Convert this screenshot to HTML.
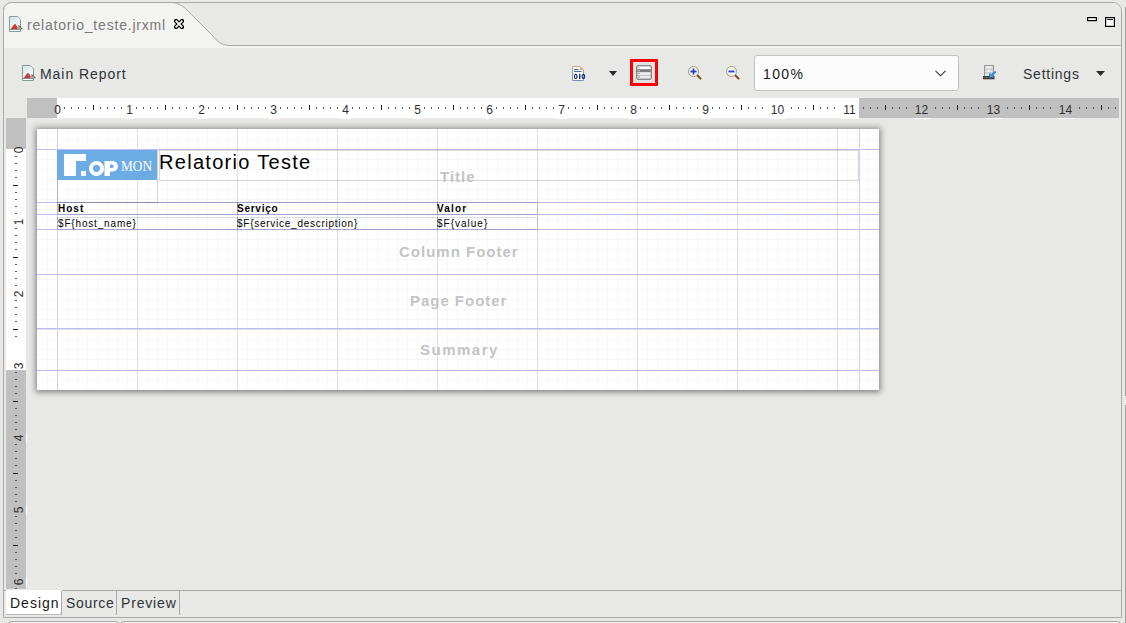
<!DOCTYPE html><html><head><meta charset="utf-8"><style>
*{margin:0;padding:0;box-sizing:border-box}
html,body{width:1126px;height:623px;overflow:hidden;background:#e8e8e7;font-family:"Liberation Sans", sans-serif;position:relative}
.abs{position:absolute}
.t{position:absolute;white-space:nowrap;line-height:1}
</style></head><body>
<div class="abs" style="left:1125px;top:7px;width:1px;height:389px;background:#a0a0a0"></div>
<div class="abs" style="left:1125px;top:405px;width:1px;height:218px;background:#a0a0a0"></div>
<div class="abs" style="left:1119px;top:48px;width:2px;height:570px;background:#f0f0ef"></div>
<div class="abs" style="left:3px;top:2px;width:1119px;height:616px;border:1px solid #a9a9a9;border-radius:9px 9px 0 0;background:#e8e8e7"></div>
<div class="abs" style="left:4px;top:3px;width:1117px;height:42px;background:#e8e8e7;border-radius:8px 8px 0 0"></div>
<div class="abs" style="left:4px;top:46px;width:1117px;height:2px;background:#f3f3f2"></div>
<svg class="abs" style="left:0;top:0" width="1126" height="50"><path d="M3.5,48 L3.5,10.5 A8,8 0 0 1 11.5,2.5 L171,2.5 C176,2.5 180,4.2 184.5,7.7 L211.5,34.5 C216,40 221,45.5 229,45.5 L1121,45.5 L1121,48 Z" fill="#f3f3f2"/><path d="M3.5,48 L3.5,10.5 A8,8 0 0 1 11.5,2.5 L171,2.5 C176,2.5 180,4.2 184.5,7.7 L211.5,34.5 C216,40 221,45.5 229,45.5 L1121,45.5" fill="none" stroke="#a9a9a9" stroke-width="1"/></svg>
<svg class="abs" style="left:9px;top:16px" width="14" height="16" viewBox="0 0 14 16" ><defs><linearGradient id="g1" x1="0" y1="0" x2="0.5" y2="1"><stop offset="0" stop-color="#cfe5e7"/><stop offset="1" stop-color="#fbfdfd"/></linearGradient></defs><path d="M0.5,0.5 H8.3 L11.5,3.7 V15.5 H0.5 Z" fill="url(#g1)" stroke="#869a9a" stroke-width="1"/><rect x="8.8" y="1.8" width="1.3" height="1.3" fill="#ffffff"/><path d="M1.6,13.2 L5.2,8.2 L6.7,8.2 L9,12 L8,13.2 Z" fill="#d0363a"/><path d="M7.6,13.2 L9.6,9.2 L13.6,13.2 Z" fill="#a9a9a9"/><path d="M9.8,9.4 L13.4,13.1" stroke="#3a3a3a" stroke-width="0.9" fill="none"/><rect x="1" y="13.7" width="10" height="1.3" fill="#ffffff"/><rect x="1" y="12.9" width="10.5" height="0.8" fill="#5f6e6e"/></svg>
<div class="t" style="left:27px;top:18px;font-size:14px;color:#7a7a7a;letter-spacing:0.8px">relatorio_teste.jrxml</div>
<svg class="abs" style="left:174px;top:19px" width="10" height="10" viewBox="0 0 10 10" ><path d="M2,2 L8,8 M8,2 L2,8" stroke="#000" stroke-width="4.2" stroke-linecap="square" fill="none"/><path d="M2.2,2.2 L7.8,7.8 M7.8,2.2 L2.2,7.8" stroke="#fff" stroke-width="1.7" stroke-linecap="square" fill="none"/></svg>
<svg class="abs" style="left:1087px;top:17px" width="10" height="5" viewBox="0 0 10 5" ><rect x="0.6" y="0.6" width="8.8" height="3" fill="#fff" stroke="#000" stroke-width="1.2"/></svg>
<svg class="abs" style="left:1105px;top:17px" width="10" height="10" viewBox="0 0 10 10" ><rect x="0.6" y="0.6" width="8.8" height="8.8" fill="#fff" stroke="#000" stroke-width="1.2"/><rect x="2" y="2" width="6" height="0.9" fill="#000"/></svg>
<svg class="abs" style="left:22px;top:65px" width="14" height="16" viewBox="0 0 14 16" ><defs><linearGradient id="g2" x1="0" y1="0" x2="0.5" y2="1"><stop offset="0" stop-color="#cfe5e7"/><stop offset="1" stop-color="#fbfdfd"/></linearGradient></defs><path d="M0.5,0.5 H8.3 L11.5,3.7 V15.5 H0.5 Z" fill="url(#g2)" stroke="#869a9a" stroke-width="1"/><rect x="8.8" y="1.8" width="1.3" height="1.3" fill="#ffffff"/><path d="M1.6,13.2 L5.2,8.2 L6.7,8.2 L9,12 L8,13.2 Z" fill="#d0363a"/><path d="M7.6,13.2 L9.6,9.2 L13.6,13.2 Z" fill="#a9a9a9"/><path d="M9.8,9.4 L13.4,13.1" stroke="#3a3a3a" stroke-width="0.9" fill="none"/><rect x="1" y="13.7" width="10" height="1.3" fill="#ffffff"/><rect x="1" y="12.9" width="10.5" height="0.8" fill="#5f6e6e"/></svg>
<div class="t" style="left:40px;top:67px;font-size:14px;color:#2e3436;letter-spacing:0.95px">Main Report</div>
<svg class="abs" style="left:572px;top:66px" width="14" height="15" viewBox="0 0 14 15" ><defs><linearGradient id="bg1" x1="0" y1="0" x2="0" y2="1"><stop offset="0" stop-color="#c8b070"/><stop offset="1" stop-color="#8090b8"/></linearGradient></defs><path d="M0.5,0.5 H8 L11.5,4 V14.5 H0.5 Z" fill="#f4f6fb" stroke="url(#bg1)" stroke-width="1"/><path d="M8,0.5 V4 H11.5 Z" fill="#e8b850"/><rect x="2" y="3" width="4.5" height="1" fill="#4a6aa8"/><rect x="2" y="5" width="7.5" height="1" fill="#4a6aa8"/><ellipse cx="3.7" cy="10.4" rx="1.3" ry="2.05" fill="none" stroke="#0d2a6a" stroke-width="1.15"/><rect x="7.1" y="7.8" width="1.3" height="5.2" fill="#0d2a6a"/><ellipse cx="11.4" cy="10.4" rx="1.3" ry="2.05" fill="none" stroke="#0d2a6a" stroke-width="1.15"/></svg>
<svg class="abs" style="left:609px;top:71px" width="8" height="5" viewBox="0 0 8 5" ><path d="M0,0 H8 L4.0,5 Z" fill="#2a2a2a"/></svg>
<div class="abs" style="left:630px;top:59px;width:28px;height:27px;border:3px solid #ff0000;border-radius:1px;background:#e2e2e2"></div>
<svg class="abs" style="left:636px;top:65px" width="16" height="15" viewBox="0 0 16 15" ><rect x="0.5" y="0.5" width="15" height="14" rx="1.5" fill="#9a9a9a" stroke="#8a8a8a"/><rect x="1.5" y="1.5" width="13" height="2.6" fill="#ffffff"/><rect x="1.5" y="4.5" width="13" height="2.4" fill="#7a7a7a"/><rect x="1.5" y="7.3" width="13" height="2.6" fill="#f2f2f2"/><rect x="1.5" y="10.5" width="13" height="3" fill="#ececec"/><circle cx="3" cy="2.8" r="0.6" fill="#777"/><circle cx="3" cy="5.7" r="0.6" fill="#fff"/><circle cx="3" cy="8.6" r="0.6" fill="#555"/><circle cx="3" cy="12" r="0.6" fill="#444"/></svg>
<svg class="abs" style="left:688px;top:66px" width="14" height="14" viewBox="0 0 14 14" ><line x1="9" y1="9" x2="12.5" y2="12.5" stroke="#7a4a2a" stroke-width="2" stroke-linecap="round"/><circle cx="5.5" cy="5.5" r="5" fill="#f0f4f8" stroke="#a89a6a" stroke-width="1"/><rect x="2.5" y="4.6" width="6" height="1.8" fill="#2a3ad0"/><rect x="4.6" y="2.5" width="1.8" height="6" fill="#2a3ad0"/></svg>
<svg class="abs" style="left:726px;top:66px" width="14" height="14" viewBox="0 0 14 14" ><line x1="9" y1="9" x2="12.5" y2="12.5" stroke="#7a4a2a" stroke-width="2" stroke-linecap="round"/><circle cx="5.5" cy="5.5" r="5" fill="#f0f4f8" stroke="#a89a6a" stroke-width="1"/><rect x="2.5" y="4.6" width="6" height="1.8" fill="#2a3ad0"/></svg>
<div class="abs" style="left:754px;top:55px;width:205px;height:36px;background:#fcfcfc;border:1px solid #c2c2c2;border-radius:3px"></div>
<div class="t" style="left:763px;top:67px;font-size:14px;color:#1a1a1a;letter-spacing:1.4px">100%</div>
<svg class="abs" style="left:935px;top:70px" width="11" height="7" viewBox="0 0 11 7" ><path d="M0.5,0.8 L5.5,5.8 L10.5,0.8" fill="none" stroke="#333" stroke-width="1.1"/></svg>
<svg class="abs" style="left:982px;top:65px" width="15" height="15" viewBox="0 0 15 15" ><defs><linearGradient id="sg" x1="0" y1="0" x2="1" y2="0"><stop offset="0" stop-color="#d8d8d8"/><stop offset="0.5" stop-color="#f4f4f4"/><stop offset="1" stop-color="#d0d0d0"/></linearGradient></defs><rect x="2.5" y="0.5" width="9" height="11" fill="url(#sg)" stroke="#9a9a9a"/><rect x="3" y="3.8" width="8" height="0.9" fill="#c0c0c0"/><rect x="3" y="7.3" width="8" height="0.9" fill="#c0c0c0"/><rect x="1" y="11" width="11.5" height="3.3" fill="#3c3c3c"/><rect x="1" y="12.3" width="11.5" height="0.8" fill="#707070"/><path d="M13.2,6.4 L14,7.2 L10.4,10.8 L11.8,12.2 L7.4,12.6 L7.8,8.2 L9.2,9.6 Z" fill="#3aa0f0" stroke="#1b62b8" stroke-width="0.7" stroke-linejoin="round"/></svg>
<div class="t" style="left:1023px;top:67px;font-size:14px;color:#2e3436;letter-spacing:0.76px">Settings</div>
<svg class="abs" style="left:1096px;top:71px" width="9" height="5" viewBox="0 0 9 5" ><path d="M0,0 H9 L4.5,5 Z" fill="#2a2a2a"/></svg>
<div class="abs" style="left:27px;top:118px;width:1092px;height:471px;background:#e8e8e7"></div>
<div class="abs" style="left:37px;top:129px;width:842px;height:261px;box-shadow:0 0 6px 2px rgba(0,0,0,0.3),0 2px 5px 0 rgba(0,0,0,0.2)"></div>
<svg width="1092" height="20" style="position:absolute;left:27px;top:98px" shape-rendering="crispEdges"><rect x="0" y="0" width="1092" height="20" fill="#c0c0c0"/><rect x="30" y="0" width="802" height="20" fill="#ffffff"/><rect x="37" y="9" width="1" height="2" fill="#555"/><rect x="44" y="9" width="1" height="2" fill="#555"/><rect x="51" y="9" width="1" height="2" fill="#555"/><rect x="58" y="9" width="1" height="2" fill="#555"/><rect x="66" y="7" width="1" height="5" fill="#1a1a1a"/><rect x="73" y="9" width="1" height="2" fill="#555"/><rect x="80" y="9" width="1" height="2" fill="#555"/><rect x="87" y="9" width="1" height="2" fill="#555"/><rect x="94" y="9" width="1" height="2" fill="#555"/><rect x="109" y="9" width="1" height="2" fill="#555"/><rect x="116" y="9" width="1" height="2" fill="#555"/><rect x="123" y="9" width="1" height="2" fill="#555"/><rect x="130" y="9" width="1" height="2" fill="#555"/><rect x="138" y="7" width="1" height="5" fill="#1a1a1a"/><rect x="145" y="9" width="1" height="2" fill="#555"/><rect x="152" y="9" width="1" height="2" fill="#555"/><rect x="159" y="9" width="1" height="2" fill="#555"/><rect x="166" y="9" width="1" height="2" fill="#555"/><rect x="181" y="9" width="1" height="2" fill="#555"/><rect x="188" y="9" width="1" height="2" fill="#555"/><rect x="195" y="9" width="1" height="2" fill="#555"/><rect x="202" y="9" width="1" height="2" fill="#555"/><rect x="210" y="7" width="1" height="5" fill="#1a1a1a"/><rect x="217" y="9" width="1" height="2" fill="#555"/><rect x="224" y="9" width="1" height="2" fill="#555"/><rect x="231" y="9" width="1" height="2" fill="#555"/><rect x="238" y="9" width="1" height="2" fill="#555"/><rect x="253" y="9" width="1" height="2" fill="#555"/><rect x="260" y="9" width="1" height="2" fill="#555"/><rect x="267" y="9" width="1" height="2" fill="#555"/><rect x="274" y="9" width="1" height="2" fill="#555"/><rect x="282" y="7" width="1" height="5" fill="#1a1a1a"/><rect x="289" y="9" width="1" height="2" fill="#555"/><rect x="296" y="9" width="1" height="2" fill="#555"/><rect x="303" y="9" width="1" height="2" fill="#555"/><rect x="310" y="9" width="1" height="2" fill="#555"/><rect x="325" y="9" width="1" height="2" fill="#555"/><rect x="332" y="9" width="1" height="2" fill="#555"/><rect x="339" y="9" width="1" height="2" fill="#555"/><rect x="346" y="9" width="1" height="2" fill="#555"/><rect x="354" y="7" width="1" height="5" fill="#1a1a1a"/><rect x="361" y="9" width="1" height="2" fill="#555"/><rect x="368" y="9" width="1" height="2" fill="#555"/><rect x="375" y="9" width="1" height="2" fill="#555"/><rect x="382" y="9" width="1" height="2" fill="#555"/><rect x="397" y="9" width="1" height="2" fill="#555"/><rect x="404" y="9" width="1" height="2" fill="#555"/><rect x="411" y="9" width="1" height="2" fill="#555"/><rect x="418" y="9" width="1" height="2" fill="#555"/><rect x="426" y="7" width="1" height="5" fill="#1a1a1a"/><rect x="433" y="9" width="1" height="2" fill="#555"/><rect x="440" y="9" width="1" height="2" fill="#555"/><rect x="447" y="9" width="1" height="2" fill="#555"/><rect x="454" y="9" width="1" height="2" fill="#555"/><rect x="469" y="9" width="1" height="2" fill="#555"/><rect x="476" y="9" width="1" height="2" fill="#555"/><rect x="483" y="9" width="1" height="2" fill="#555"/><rect x="490" y="9" width="1" height="2" fill="#555"/><rect x="498" y="7" width="1" height="5" fill="#1a1a1a"/><rect x="505" y="9" width="1" height="2" fill="#555"/><rect x="512" y="9" width="1" height="2" fill="#555"/><rect x="519" y="9" width="1" height="2" fill="#555"/><rect x="526" y="9" width="1" height="2" fill="#555"/><rect x="541" y="9" width="1" height="2" fill="#555"/><rect x="548" y="9" width="1" height="2" fill="#555"/><rect x="555" y="9" width="1" height="2" fill="#555"/><rect x="562" y="9" width="1" height="2" fill="#555"/><rect x="570" y="7" width="1" height="5" fill="#1a1a1a"/><rect x="577" y="9" width="1" height="2" fill="#555"/><rect x="584" y="9" width="1" height="2" fill="#555"/><rect x="591" y="9" width="1" height="2" fill="#555"/><rect x="598" y="9" width="1" height="2" fill="#555"/><rect x="613" y="9" width="1" height="2" fill="#555"/><rect x="620" y="9" width="1" height="2" fill="#555"/><rect x="627" y="9" width="1" height="2" fill="#555"/><rect x="634" y="9" width="1" height="2" fill="#555"/><rect x="642" y="7" width="1" height="5" fill="#1a1a1a"/><rect x="649" y="9" width="1" height="2" fill="#555"/><rect x="656" y="9" width="1" height="2" fill="#555"/><rect x="663" y="9" width="1" height="2" fill="#555"/><rect x="670" y="9" width="1" height="2" fill="#555"/><rect x="685" y="9" width="1" height="2" fill="#555"/><rect x="692" y="9" width="1" height="2" fill="#555"/><rect x="699" y="9" width="1" height="2" fill="#555"/><rect x="706" y="9" width="1" height="2" fill="#555"/><rect x="714" y="7" width="1" height="5" fill="#1a1a1a"/><rect x="721" y="9" width="1" height="2" fill="#555"/><rect x="728" y="9" width="1" height="2" fill="#555"/><rect x="735" y="9" width="1" height="2" fill="#555"/><rect x="742" y="9" width="1" height="2" fill="#555"/><rect x="757" y="9" width="1" height="2" fill="#555"/><rect x="764" y="9" width="1" height="2" fill="#555"/><rect x="771" y="9" width="1" height="2" fill="#555"/><rect x="778" y="9" width="1" height="2" fill="#555"/><rect x="786" y="7" width="1" height="5" fill="#1a1a1a"/><rect x="793" y="9" width="1" height="2" fill="#555"/><rect x="800" y="9" width="1" height="2" fill="#555"/><rect x="807" y="9" width="1" height="2" fill="#555"/><rect x="814" y="9" width="1" height="2" fill="#555"/><rect x="829" y="9" width="1" height="2" fill="#555"/><rect x="836" y="9" width="1" height="2" fill="#555"/><rect x="843" y="9" width="1" height="2" fill="#555"/><rect x="850" y="9" width="1" height="2" fill="#555"/><rect x="858" y="7" width="1" height="5" fill="#1a1a1a"/><rect x="865" y="9" width="1" height="2" fill="#555"/><rect x="872" y="9" width="1" height="2" fill="#555"/><rect x="879" y="9" width="1" height="2" fill="#555"/><rect x="886" y="9" width="1" height="2" fill="#555"/><rect x="901" y="9" width="1" height="2" fill="#555"/><rect x="908" y="9" width="1" height="2" fill="#555"/><rect x="915" y="9" width="1" height="2" fill="#555"/><rect x="922" y="9" width="1" height="2" fill="#555"/><rect x="930" y="7" width="1" height="5" fill="#1a1a1a"/><rect x="937" y="9" width="1" height="2" fill="#555"/><rect x="944" y="9" width="1" height="2" fill="#555"/><rect x="951" y="9" width="1" height="2" fill="#555"/><rect x="958" y="9" width="1" height="2" fill="#555"/><rect x="973" y="9" width="1" height="2" fill="#555"/><rect x="980" y="9" width="1" height="2" fill="#555"/><rect x="987" y="9" width="1" height="2" fill="#555"/><rect x="994" y="9" width="1" height="2" fill="#555"/><rect x="1002" y="7" width="1" height="5" fill="#1a1a1a"/><rect x="1009" y="9" width="1" height="2" fill="#555"/><rect x="1016" y="9" width="1" height="2" fill="#555"/><rect x="1023" y="9" width="1" height="2" fill="#555"/><rect x="1030" y="9" width="1" height="2" fill="#555"/><rect x="1045" y="9" width="1" height="2" fill="#555"/><rect x="1052" y="9" width="1" height="2" fill="#555"/><rect x="1059" y="9" width="1" height="2" fill="#555"/><rect x="1066" y="9" width="1" height="2" fill="#555"/><rect x="1074" y="7" width="1" height="5" fill="#1a1a1a"/><rect x="1081" y="9" width="1" height="2" fill="#555"/><rect x="1088" y="9" width="1" height="2" fill="#555"/></svg>
<div class="abs" style="left:52.5px;top:118px;width:10px;height:1px;background:#ffffff"></div>
<div class="t" style="left:37.5px;top:104px;width:40px;text-align:center;font-size:12px;color:#303030">0</div>
<div class="abs" style="left:124.5px;top:103px;width:10px;height:13px;background:#ffffff"></div>
<div class="abs" style="left:124.5px;top:118px;width:10px;height:1px;background:#ffffff"></div>
<div class="t" style="left:109.5px;top:104px;width:40px;text-align:center;font-size:12px;color:#303030">1</div>
<div class="abs" style="left:196.5px;top:103px;width:10px;height:13px;background:#ffffff"></div>
<div class="abs" style="left:196.5px;top:118px;width:10px;height:1px;background:#ffffff"></div>
<div class="t" style="left:181.5px;top:104px;width:40px;text-align:center;font-size:12px;color:#303030">2</div>
<div class="abs" style="left:268.5px;top:103px;width:10px;height:13px;background:#ffffff"></div>
<div class="abs" style="left:268.5px;top:118px;width:10px;height:1px;background:#ffffff"></div>
<div class="t" style="left:253.5px;top:104px;width:40px;text-align:center;font-size:12px;color:#303030">3</div>
<div class="abs" style="left:340.5px;top:103px;width:10px;height:13px;background:#ffffff"></div>
<div class="abs" style="left:340.5px;top:118px;width:10px;height:1px;background:#ffffff"></div>
<div class="t" style="left:325.5px;top:104px;width:40px;text-align:center;font-size:12px;color:#303030">4</div>
<div class="abs" style="left:412.5px;top:103px;width:10px;height:13px;background:#ffffff"></div>
<div class="abs" style="left:412.5px;top:118px;width:10px;height:1px;background:#ffffff"></div>
<div class="t" style="left:397.5px;top:104px;width:40px;text-align:center;font-size:12px;color:#303030">5</div>
<div class="abs" style="left:484.5px;top:103px;width:10px;height:13px;background:#ffffff"></div>
<div class="abs" style="left:484.5px;top:118px;width:10px;height:1px;background:#ffffff"></div>
<div class="t" style="left:469.5px;top:104px;width:40px;text-align:center;font-size:12px;color:#303030">6</div>
<div class="abs" style="left:556.5px;top:103px;width:10px;height:13px;background:#ffffff"></div>
<div class="abs" style="left:556.5px;top:118px;width:10px;height:1px;background:#ffffff"></div>
<div class="t" style="left:541.5px;top:104px;width:40px;text-align:center;font-size:12px;color:#303030">7</div>
<div class="abs" style="left:628.5px;top:103px;width:10px;height:13px;background:#ffffff"></div>
<div class="abs" style="left:628.5px;top:118px;width:10px;height:1px;background:#ffffff"></div>
<div class="t" style="left:613.5px;top:104px;width:40px;text-align:center;font-size:12px;color:#303030">8</div>
<div class="abs" style="left:700.5px;top:103px;width:10px;height:13px;background:#ffffff"></div>
<div class="abs" style="left:700.5px;top:118px;width:10px;height:1px;background:#ffffff"></div>
<div class="t" style="left:685.5px;top:104px;width:40px;text-align:center;font-size:12px;color:#303030">9</div>
<div class="abs" style="left:769.0px;top:103px;width:17px;height:13px;background:#ffffff"></div>
<div class="abs" style="left:769.0px;top:118px;width:17px;height:1px;background:#ffffff"></div>
<div class="t" style="left:757.5px;top:104px;width:40px;text-align:center;font-size:12px;color:#303030">10</div>
<div class="abs" style="left:841.0px;top:103px;width:17px;height:13px;background:#ffffff"></div>
<div class="abs" style="left:841.0px;top:118px;width:17px;height:1px;background:#ffffff"></div>
<div class="t" style="left:829.5px;top:104px;width:40px;text-align:center;font-size:12px;color:#303030">11</div>
<div class="abs" style="left:913.0px;top:103px;width:17px;height:13px;background:#c0c0c0"></div>
<div class="abs" style="left:913.0px;top:118px;width:17px;height:1px;background:#ffffff"></div>
<div class="t" style="left:901.5px;top:104px;width:40px;text-align:center;font-size:12px;color:#303030">12</div>
<div class="abs" style="left:985.0px;top:103px;width:17px;height:13px;background:#c0c0c0"></div>
<div class="abs" style="left:985.0px;top:118px;width:17px;height:1px;background:#ffffff"></div>
<div class="t" style="left:973.5px;top:104px;width:40px;text-align:center;font-size:12px;color:#303030">13</div>
<div class="abs" style="left:1057.0px;top:103px;width:17px;height:13px;background:#c0c0c0"></div>
<div class="abs" style="left:1057.0px;top:118px;width:17px;height:1px;background:#ffffff"></div>
<div class="t" style="left:1045.5px;top:104px;width:40px;text-align:center;font-size:12px;color:#303030">14</div>
<svg width="20" height="471" style="position:absolute;left:6px;top:118px" shape-rendering="crispEdges"><rect x="0" y="0" width="20" height="471" fill="#c0c0c0"/><rect x="0" y="31" width="20" height="221" fill="#ffffff"/><rect x="9" y="38" width="2" height="1" fill="#555"/><rect x="9" y="45" width="2" height="1" fill="#555"/><rect x="9" y="52" width="2" height="1" fill="#555"/><rect x="9" y="59" width="2" height="1" fill="#555"/><rect x="7" y="67" width="5" height="1" fill="#1a1a1a"/><rect x="9" y="74" width="2" height="1" fill="#555"/><rect x="9" y="81" width="2" height="1" fill="#555"/><rect x="9" y="88" width="2" height="1" fill="#555"/><rect x="9" y="95" width="2" height="1" fill="#555"/><rect x="9" y="110" width="2" height="1" fill="#555"/><rect x="9" y="117" width="2" height="1" fill="#555"/><rect x="9" y="124" width="2" height="1" fill="#555"/><rect x="9" y="131" width="2" height="1" fill="#555"/><rect x="7" y="139" width="5" height="1" fill="#1a1a1a"/><rect x="9" y="146" width="2" height="1" fill="#555"/><rect x="9" y="153" width="2" height="1" fill="#555"/><rect x="9" y="160" width="2" height="1" fill="#555"/><rect x="9" y="167" width="2" height="1" fill="#555"/><rect x="9" y="182" width="2" height="1" fill="#555"/><rect x="9" y="189" width="2" height="1" fill="#555"/><rect x="9" y="196" width="2" height="1" fill="#555"/><rect x="9" y="203" width="2" height="1" fill="#555"/><rect x="7" y="211" width="5" height="1" fill="#1a1a1a"/><rect x="9" y="218" width="2" height="1" fill="#555"/><rect x="9" y="254" width="2" height="1" fill="#555"/><rect x="9" y="261" width="2" height="1" fill="#555"/><rect x="9" y="268" width="2" height="1" fill="#555"/><rect x="9" y="275" width="2" height="1" fill="#555"/><rect x="7" y="283" width="5" height="1" fill="#1a1a1a"/><rect x="9" y="290" width="2" height="1" fill="#555"/><rect x="9" y="297" width="2" height="1" fill="#555"/><rect x="9" y="304" width="2" height="1" fill="#555"/><rect x="9" y="311" width="2" height="1" fill="#555"/><rect x="9" y="326" width="2" height="1" fill="#555"/><rect x="9" y="333" width="2" height="1" fill="#555"/><rect x="9" y="340" width="2" height="1" fill="#555"/><rect x="9" y="347" width="2" height="1" fill="#555"/><rect x="7" y="355" width="5" height="1" fill="#1a1a1a"/><rect x="9" y="362" width="2" height="1" fill="#555"/><rect x="9" y="369" width="2" height="1" fill="#555"/><rect x="9" y="376" width="2" height="1" fill="#555"/><rect x="9" y="383" width="2" height="1" fill="#555"/><rect x="9" y="398" width="2" height="1" fill="#555"/><rect x="9" y="405" width="2" height="1" fill="#555"/><rect x="9" y="412" width="2" height="1" fill="#555"/><rect x="9" y="419" width="2" height="1" fill="#555"/><rect x="7" y="427" width="5" height="1" fill="#1a1a1a"/><rect x="9" y="434" width="2" height="1" fill="#555"/><rect x="9" y="441" width="2" height="1" fill="#555"/><rect x="9" y="448" width="2" height="1" fill="#555"/><rect x="9" y="455" width="2" height="1" fill="#555"/><rect x="9" y="470" width="2" height="1" fill="#555"/></svg>
<div class="t" style="left:-1px;top:143.5px;width:40px;text-align:center;font-size:12px;color:#303030;transform:rotate(-90deg);transform-origin:20px 6px">0</div>
<div class="abs" style="left:6px;top:216.5px;width:20px;height:9px;background:#ffffff"></div>
<div class="t" style="left:-1px;top:215.5px;width:40px;text-align:center;font-size:12px;color:#303030;transform:rotate(-90deg);transform-origin:20px 6px">1</div>
<div class="abs" style="left:6px;top:288.5px;width:20px;height:9px;background:#ffffff"></div>
<div class="t" style="left:-1px;top:287.5px;width:40px;text-align:center;font-size:12px;color:#303030;transform:rotate(-90deg);transform-origin:20px 6px">2</div>
<div class="abs" style="left:6px;top:360.5px;width:20px;height:9px;background:#ffffff"></div>
<div class="t" style="left:-1px;top:359.5px;width:40px;text-align:center;font-size:12px;color:#303030;transform:rotate(-90deg);transform-origin:20px 6px">3</div>
<div class="abs" style="left:6px;top:432.5px;width:20px;height:9px;background:#c0c0c0"></div>
<div class="abs" style="left:26px;top:432.5px;width:1px;height:10px;background:#ffffff"></div>
<div class="t" style="left:-1px;top:431.5px;width:40px;text-align:center;font-size:12px;color:#303030;transform:rotate(-90deg);transform-origin:20px 6px">4</div>
<div class="abs" style="left:6px;top:504.5px;width:20px;height:9px;background:#c0c0c0"></div>
<div class="abs" style="left:26px;top:504.5px;width:1px;height:10px;background:#ffffff"></div>
<div class="t" style="left:-1px;top:503.5px;width:40px;text-align:center;font-size:12px;color:#303030;transform:rotate(-90deg);transform-origin:20px 6px">5</div>
<div class="abs" style="left:6px;top:576.5px;width:20px;height:9px;background:#c0c0c0"></div>
<div class="abs" style="left:26px;top:576.5px;width:1px;height:10px;background:#ffffff"></div>
<div class="t" style="left:-1px;top:575.5px;width:40px;text-align:center;font-size:12px;color:#303030;transform:rotate(-90deg);transform-origin:20px 6px">6</div>
<svg width="842" height="261" style="position:absolute;left:37px;top:129px" shape-rendering="crispEdges"><rect x="0" y="0" width="842" height="261" fill="#ffffff"/><rect x="10" y="0" width="1" height="261" fill="#f7f7f7"/><rect x="20" y="0" width="1" height="261" fill="#f7f7f7"/><rect x="30" y="0" width="1" height="261" fill="#f7f7f7"/><rect x="40" y="0" width="1" height="261" fill="#f7f7f7"/><rect x="50" y="0" width="1" height="261" fill="#f7f7f7"/><rect x="60" y="0" width="1" height="261" fill="#f7f7f7"/><rect x="70" y="0" width="1" height="261" fill="#f7f7f7"/><rect x="80" y="0" width="1" height="261" fill="#f7f7f7"/><rect x="90" y="0" width="1" height="261" fill="#f7f7f7"/><rect x="110" y="0" width="1" height="261" fill="#f7f7f7"/><rect x="120" y="0" width="1" height="261" fill="#f7f7f7"/><rect x="130" y="0" width="1" height="261" fill="#f7f7f7"/><rect x="140" y="0" width="1" height="261" fill="#f7f7f7"/><rect x="150" y="0" width="1" height="261" fill="#f7f7f7"/><rect x="160" y="0" width="1" height="261" fill="#f7f7f7"/><rect x="170" y="0" width="1" height="261" fill="#f7f7f7"/><rect x="180" y="0" width="1" height="261" fill="#f7f7f7"/><rect x="190" y="0" width="1" height="261" fill="#f7f7f7"/><rect x="210" y="0" width="1" height="261" fill="#f7f7f7"/><rect x="220" y="0" width="1" height="261" fill="#f7f7f7"/><rect x="230" y="0" width="1" height="261" fill="#f7f7f7"/><rect x="240" y="0" width="1" height="261" fill="#f7f7f7"/><rect x="250" y="0" width="1" height="261" fill="#f7f7f7"/><rect x="260" y="0" width="1" height="261" fill="#f7f7f7"/><rect x="270" y="0" width="1" height="261" fill="#f7f7f7"/><rect x="280" y="0" width="1" height="261" fill="#f7f7f7"/><rect x="290" y="0" width="1" height="261" fill="#f7f7f7"/><rect x="310" y="0" width="1" height="261" fill="#f7f7f7"/><rect x="320" y="0" width="1" height="261" fill="#f7f7f7"/><rect x="330" y="0" width="1" height="261" fill="#f7f7f7"/><rect x="340" y="0" width="1" height="261" fill="#f7f7f7"/><rect x="350" y="0" width="1" height="261" fill="#f7f7f7"/><rect x="360" y="0" width="1" height="261" fill="#f7f7f7"/><rect x="370" y="0" width="1" height="261" fill="#f7f7f7"/><rect x="380" y="0" width="1" height="261" fill="#f7f7f7"/><rect x="390" y="0" width="1" height="261" fill="#f7f7f7"/><rect x="410" y="0" width="1" height="261" fill="#f7f7f7"/><rect x="420" y="0" width="1" height="261" fill="#f7f7f7"/><rect x="430" y="0" width="1" height="261" fill="#f7f7f7"/><rect x="440" y="0" width="1" height="261" fill="#f7f7f7"/><rect x="450" y="0" width="1" height="261" fill="#f7f7f7"/><rect x="460" y="0" width="1" height="261" fill="#f7f7f7"/><rect x="470" y="0" width="1" height="261" fill="#f7f7f7"/><rect x="480" y="0" width="1" height="261" fill="#f7f7f7"/><rect x="490" y="0" width="1" height="261" fill="#f7f7f7"/><rect x="510" y="0" width="1" height="261" fill="#f7f7f7"/><rect x="520" y="0" width="1" height="261" fill="#f7f7f7"/><rect x="530" y="0" width="1" height="261" fill="#f7f7f7"/><rect x="540" y="0" width="1" height="261" fill="#f7f7f7"/><rect x="550" y="0" width="1" height="261" fill="#f7f7f7"/><rect x="560" y="0" width="1" height="261" fill="#f7f7f7"/><rect x="570" y="0" width="1" height="261" fill="#f7f7f7"/><rect x="580" y="0" width="1" height="261" fill="#f7f7f7"/><rect x="590" y="0" width="1" height="261" fill="#f7f7f7"/><rect x="610" y="0" width="1" height="261" fill="#f7f7f7"/><rect x="620" y="0" width="1" height="261" fill="#f7f7f7"/><rect x="630" y="0" width="1" height="261" fill="#f7f7f7"/><rect x="640" y="0" width="1" height="261" fill="#f7f7f7"/><rect x="650" y="0" width="1" height="261" fill="#f7f7f7"/><rect x="660" y="0" width="1" height="261" fill="#f7f7f7"/><rect x="670" y="0" width="1" height="261" fill="#f7f7f7"/><rect x="680" y="0" width="1" height="261" fill="#f7f7f7"/><rect x="690" y="0" width="1" height="261" fill="#f7f7f7"/><rect x="710" y="0" width="1" height="261" fill="#f7f7f7"/><rect x="720" y="0" width="1" height="261" fill="#f7f7f7"/><rect x="730" y="0" width="1" height="261" fill="#f7f7f7"/><rect x="740" y="0" width="1" height="261" fill="#f7f7f7"/><rect x="750" y="0" width="1" height="261" fill="#f7f7f7"/><rect x="760" y="0" width="1" height="261" fill="#f7f7f7"/><rect x="770" y="0" width="1" height="261" fill="#f7f7f7"/><rect x="780" y="0" width="1" height="261" fill="#f7f7f7"/><rect x="790" y="0" width="1" height="261" fill="#f7f7f7"/><rect x="810" y="0" width="1" height="261" fill="#f7f7f7"/><rect x="820" y="0" width="1" height="261" fill="#f7f7f7"/><rect x="830" y="0" width="1" height="261" fill="#f7f7f7"/><rect x="840" y="0" width="1" height="261" fill="#f7f7f7"/><rect x="0" y="10" width="842" height="1" fill="#f7f7f7"/><rect x="0" y="20" width="842" height="1" fill="#f7f7f7"/><rect x="0" y="30" width="842" height="1" fill="#f7f7f7"/><rect x="0" y="40" width="842" height="1" fill="#f7f7f7"/><rect x="0" y="50" width="842" height="1" fill="#f7f7f7"/><rect x="0" y="60" width="842" height="1" fill="#f7f7f7"/><rect x="0" y="70" width="842" height="1" fill="#f7f7f7"/><rect x="0" y="80" width="842" height="1" fill="#f7f7f7"/><rect x="0" y="90" width="842" height="1" fill="#f7f7f7"/><rect x="0" y="110" width="842" height="1" fill="#f7f7f7"/><rect x="0" y="120" width="842" height="1" fill="#f7f7f7"/><rect x="0" y="130" width="842" height="1" fill="#f7f7f7"/><rect x="0" y="140" width="842" height="1" fill="#f7f7f7"/><rect x="0" y="150" width="842" height="1" fill="#f7f7f7"/><rect x="0" y="160" width="842" height="1" fill="#f7f7f7"/><rect x="0" y="170" width="842" height="1" fill="#f7f7f7"/><rect x="0" y="180" width="842" height="1" fill="#f7f7f7"/><rect x="0" y="190" width="842" height="1" fill="#f7f7f7"/><rect x="0" y="210" width="842" height="1" fill="#f7f7f7"/><rect x="0" y="220" width="842" height="1" fill="#f7f7f7"/><rect x="0" y="230" width="842" height="1" fill="#f7f7f7"/><rect x="0" y="240" width="842" height="1" fill="#f7f7f7"/><rect x="0" y="250" width="842" height="1" fill="#f7f7f7"/><rect x="0" y="260" width="842" height="1" fill="#f7f7f7"/><rect x="100" y="0" width="1" height="261" fill="#dedede"/><rect x="200" y="0" width="1" height="261" fill="#dedede"/><rect x="300" y="0" width="1" height="261" fill="#dedede"/><rect x="400" y="0" width="1" height="261" fill="#dedede"/><rect x="500" y="0" width="1" height="261" fill="#dedede"/><rect x="600" y="0" width="1" height="261" fill="#dedede"/><rect x="700" y="0" width="1" height="261" fill="#dedede"/><rect x="800" y="0" width="1" height="261" fill="#dedede"/><rect x="0" y="100" width="842" height="1" fill="#dedede"/><rect x="0" y="200" width="842" height="1" fill="#dedede"/><rect x="0" y="20" width="842" height="1" fill="#bdbdf5"/><rect x="0" y="73" width="842" height="1" fill="#bdbdf5"/><rect x="0" y="85" width="842" height="1" fill="#bdbdf5"/><rect x="0" y="100" width="842" height="1" fill="#bdbdf5"/><rect x="0" y="145" width="842" height="1" fill="#bdbdf5"/><rect x="0" y="199" width="842" height="1" fill="#bdbdf5"/><rect x="0" y="241" width="842" height="1" fill="#bdbdf5"/><rect x="20" y="0" width="1" height="261" fill="#cfcff8"/><rect x="822" y="0" width="1" height="261" fill="#cfcff8"/><rect x="20" y="21" width="100" height="1" fill="rgba(0,0,0,0.14)"/><rect x="20" y="73" width="101" height="1" fill="rgba(0,0,0,0.14)"/><rect x="20" y="21" width="1" height="52" fill="rgba(0,0,0,0.14)"/><rect x="120" y="21" width="1" height="52" fill="rgba(0,0,0,0.14)"/><rect x="122" y="21" width="699" height="1" fill="rgba(0,0,0,0.14)"/><rect x="122" y="51" width="700" height="1" fill="rgba(0,0,0,0.14)"/><rect x="122" y="21" width="1" height="30" fill="rgba(0,0,0,0.14)"/><rect x="821" y="21" width="1" height="30" fill="rgba(0,0,0,0.14)"/><rect x="20" y="73" width="180" height="1" fill="rgba(0,0,0,0.14)"/><rect x="20" y="85" width="181" height="1" fill="rgba(0,0,0,0.14)"/><rect x="20" y="73" width="1" height="12" fill="rgba(0,0,0,0.14)"/><rect x="200" y="73" width="1" height="12" fill="rgba(0,0,0,0.14)"/><rect x="200" y="73" width="200" height="1" fill="rgba(0,0,0,0.14)"/><rect x="200" y="85" width="201" height="1" fill="rgba(0,0,0,0.14)"/><rect x="200" y="73" width="1" height="12" fill="rgba(0,0,0,0.14)"/><rect x="400" y="73" width="1" height="12" fill="rgba(0,0,0,0.14)"/><rect x="400" y="73" width="100" height="1" fill="rgba(0,0,0,0.14)"/><rect x="400" y="85" width="101" height="1" fill="rgba(0,0,0,0.14)"/><rect x="400" y="73" width="1" height="12" fill="rgba(0,0,0,0.14)"/><rect x="500" y="73" width="1" height="12" fill="rgba(0,0,0,0.14)"/><rect x="20" y="88" width="180" height="1" fill="rgba(0,0,0,0.14)"/><rect x="20" y="100" width="181" height="1" fill="rgba(0,0,0,0.14)"/><rect x="20" y="88" width="1" height="12" fill="rgba(0,0,0,0.14)"/><rect x="200" y="88" width="1" height="12" fill="rgba(0,0,0,0.14)"/><rect x="200" y="88" width="200" height="1" fill="rgba(0,0,0,0.14)"/><rect x="200" y="100" width="201" height="1" fill="rgba(0,0,0,0.14)"/><rect x="200" y="88" width="1" height="12" fill="rgba(0,0,0,0.14)"/><rect x="400" y="88" width="1" height="12" fill="rgba(0,0,0,0.14)"/><rect x="400" y="88" width="100" height="1" fill="rgba(0,0,0,0.14)"/><rect x="400" y="100" width="101" height="1" fill="rgba(0,0,0,0.14)"/><rect x="400" y="88" width="1" height="12" fill="rgba(0,0,0,0.14)"/><rect x="500" y="88" width="1" height="12" fill="rgba(0,0,0,0.14)"/><rect x="20" y="21" width="100" height="30" fill="#6cace4"/><path d="M27,25 H49 V32 H39 V47 H27 Z" fill="#fff"/><rect x="44" y="42" width="5" height="5" fill="#fff"/><g transform="translate(-37,-129)" shape-rendering="geometricPrecision" fill="#fff" fill-rule="evenodd"><path d="M96.5,161 A7.5,7.5 0 1 1 96.49,161 Z M96.5,164.8 A3.7,3.7 0 1 0 96.51,164.8 Z"/><path d="M104.5,161 H112.5 A5.5,5.3 0 0 1 112.5,171.6 H110 V176 H104.5 Z M110,164.6 V168 H112 A1.7,1.7 0 0 0 112,164.6 Z"/></g></svg>
<div class="t" style="left:121px;top:160px;font-size:14px;font-family:'Liberation Serif',serif;color:#fff;transform:scaleX(0.95);transform-origin:0 0">MON</div>
<div class="t" style="left:159px;top:152px;font-size:20px;color:#000;letter-spacing:1.3px">Relatorio Teste</div>
<div class="t" style="left:58px;top:203.5px;font-size:10px;font-weight:bold;color:#000;letter-spacing:1.0px">Host</div>
<div class="t" style="left:237px;top:203.5px;font-size:10px;font-weight:bold;color:#000;letter-spacing:0.75px">Serviço</div>
<div class="t" style="left:437px;top:203.5px;font-size:10px;font-weight:bold;color:#000;letter-spacing:1.2px">Valor</div>
<div class="t" style="left:58px;top:219px;font-size:10px;color:#000;letter-spacing:0.83px">$F{host_name}</div>
<div class="t" style="left:237px;top:219px;font-size:10px;color:#000;letter-spacing:0.74px">$F{service_description}</div>
<div class="t" style="left:437px;top:219px;font-size:10px;color:#000;letter-spacing:1.0px">$F{value}</div>
<div class="t" style="left:440px;top:169px;font-size:15px;font-weight:bold;color:#c4c4c4;letter-spacing:1.0px">Title</div>
<div class="t" style="left:399px;top:244px;font-size:15px;font-weight:bold;color:#c4c4c4;letter-spacing:1.0px">Column Footer</div>
<div class="t" style="left:410px;top:293px;font-size:15px;font-weight:bold;color:#c4c4c4;letter-spacing:0.97px">Page Footer</div>
<div class="t" style="left:420px;top:342px;font-size:15px;font-weight:bold;color:#c4c4c4;letter-spacing:1.5px">Summary</div>
<div class="abs" style="left:4px;top:590px;width:1117px;height:1px;background:#a9a9a9"></div>
<div class="abs" style="left:6px;top:590px;width:56px;height:25px;background:#fff;border-radius:0 0 4px 0;border-bottom:1px solid #b8b8b8"></div>
<div class="abs" style="left:8px;top:621px;width:111px;height:4px;border:1px solid #a9a9a9;border-radius:4px 4px 0 0;background:#f7f7f7"></div>
<div class="abs" style="left:120px;top:621px;width:1001px;height:4px;border:1px solid #a9a9a9;border-radius:4px 4px 0 0;background:#f3f3f2"></div>
<div class="abs" style="left:61px;top:591px;width:1px;height:24px;background:#a9a9a9"></div>
<div class="abs" style="left:116px;top:591px;width:1px;height:24px;background:#a9a9a9"></div>
<div class="abs" style="left:179px;top:591px;width:1px;height:24px;background:#a9a9a9"></div>
<div class="t" style="left:10px;top:596px;font-size:14px;color:#1a1a1a;letter-spacing:1px">Design</div>
<div class="t" style="left:66px;top:596px;font-size:14px;color:#2e3436;letter-spacing:0.68px">Source</div>
<div class="t" style="left:121px;top:596px;font-size:14px;color:#2e3436;letter-spacing:0.83px">Preview</div>
</body></html>
